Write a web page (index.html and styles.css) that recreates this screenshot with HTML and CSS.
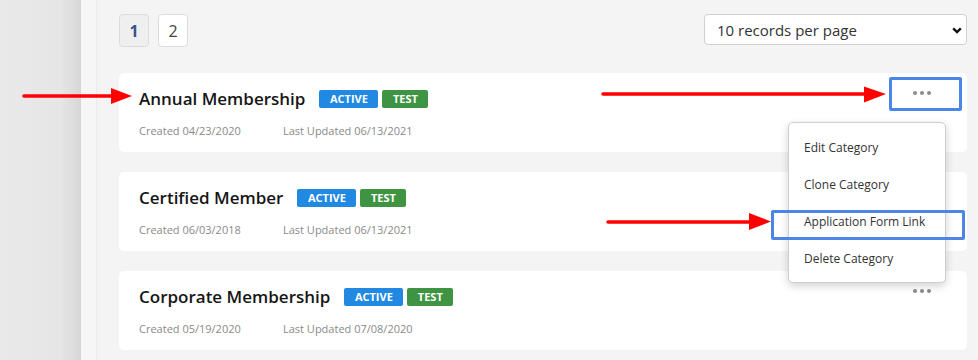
FILE: index.html
```html
<!DOCTYPE html>
<html lang="en">
<head>
    <meta charset="UTF-8">
    <meta name="viewport" content="width=device-width, initial-scale=1.0">
    <title>Membership Categories</title>
    <link rel="stylesheet" href="styles.css">
</head>
<body>
    <div class="sidebar"></div>
    <div class="gutter"></div>

    <div class="main">
        <div class="toolbar">
            <div class="pager">
                <button class="page current">1</button>
                <button class="page">2</button>
            </div>
            <div class="select-wrap">
                <select class="per-page">
                    <option>10 records per page</option>
                    <option>25 records per page</option>
                    <option>50 records per page</option>
                </select>
                <svg class="chevron" width="10" height="7" viewBox="0 0 10 7">
                    <path d="M1.2 1.3 L5 5 L8.8 1.3" fill="none" stroke="#111" stroke-width="2.4"/>
                </svg>
            </div>
        </div>

        <div class="cards">
            <div class="card">
                <div class="card-body">
                    <div class="card-head">
                        <h3>Annual Membership</h3>
                        <span class="badge active">ACTIVE</span>
                        <span class="badge test">TEST</span>
                    </div>
                    <div class="meta">
                        <span class="created">Created 04/23/2020</span>
                        <span>Last Updated 06/13/2021</span>
                    </div>
                </div>
                <button class="more"><i></i><i></i><i></i></button>
            </div>

            <div class="card">
                <div class="card-body">
                    <div class="card-head">
                        <h3>Certified Member</h3>
                        <span class="badge active">ACTIVE</span>
                        <span class="badge test">TEST</span>
                    </div>
                    <div class="meta">
                        <span class="created">Created 06/03/2018</span>
                        <span>Last Updated 06/13/2021</span>
                    </div>
                </div>
                <button class="more"><i></i><i></i><i></i></button>
            </div>

            <div class="card">
                <div class="card-body">
                    <div class="card-head">
                        <h3>Corporate Membership</h3>
                        <span class="badge active">ACTIVE</span>
                        <span class="badge test">TEST</span>
                    </div>
                    <div class="meta">
                        <span class="created">Created 05/19/2020</span>
                        <span>Last Updated 07/08/2020</span>
                    </div>
                </div>
                <button class="more"><i></i><i></i><i></i></button>
            </div>
        </div>
    </div>

    <!-- dropdown opened from the first card -->
    <ul class="menu">
        <li>Edit Category</li>
        <li>Clone Category</li>
        <li>Application Form Link</li>
        <li>Delete Category</li>
    </ul>

    <!-- screenshot annotations -->
    <div class="mark mark-more"></div>
    <div class="mark mark-link"></div>
    <svg class="arrows" width="978" height="360" viewBox="0 0 978 360">
        <g fill="#f00" stroke="#f00">
            <line x1="24" y1="96" x2="113" y2="96" stroke-width="3.5" stroke-linecap="round"/>
            <polygon points="111,88 132,96 111,104" stroke="none"/>
            <line x1="603" y1="94" x2="866" y2="94" stroke-width="3.5" stroke-linecap="round"/>
            <polygon points="864,86.5 886,94 864,102.5" stroke="none"/>
            <line x1="608" y1="222" x2="751" y2="222" stroke-width="3.5" stroke-linecap="round"/>
            <polygon points="749,213 771,221.5 749,230" stroke="none"/>
        </g>
    </svg>
</body>
</html>
```

FILE: styles.css
```css
body {
    margin: 0;
    height: 360px;
    overflow: hidden;
    display: flex;
    position: relative;
    font-family: "Open Sans", Arial, sans-serif;
    background: #f4f4f4;
}
.sidebar {
    width: 81px;
    flex-shrink: 0;
    background: linear-gradient(to right, #e9e9e9 0, #e6e6e6 60px, #d7d7d7 81px);
}
.gutter {
    width: 15px;
    flex-shrink: 0;
    background: #f6f6f6;
    border-right: 1px solid #ebebeb;
}
.main {
    flex: 1;
    padding: 14px 11px 0 22px;
    background: #f4f4f4;
}
.toolbar {
    display: flex;
    justify-content: space-between;
    align-items: flex-start;
}
.pager {
    display: flex;
    gap: 9px;
}
.page {
    width: 30px;
    height: 33px;
    padding: 0;
    border: 1px solid #dcdcdc;
    border-radius: 4px;
    background: #fff;
    color: #444;
    font-family: "Open Sans", Arial, sans-serif;
    font-size: 16px;
}
.page.current {
    background: #efefef;
    color: #34558a;
    font-weight: 700;
}
.select-wrap {
    position: relative;
}
.per-page {
    appearance: none;
    -webkit-appearance: none;
    width: 263px;
    height: 31px;
    padding: 0 12px;
    border: 1px solid #cfcfcf;
    border-radius: 4px;
    background: #fff;
    color: #333;
    font-family: "Open Sans", Arial, sans-serif;
    font-size: 15px;
}
.chevron {
    position: absolute;
    right: 5px;
    top: 13px;
    pointer-events: none;
}
.cards {
    margin-top: 26px;
    display: flex;
    flex-direction: column;
    gap: 20px;
}
.card {
    display: flex;
    justify-content: space-between;
    align-items: flex-start;
    padding: 14px 20px 13px;
    background: #fff;
    border-radius: 5px;
}
.card-head {
    display: flex;
    align-items: center;
    height: 24px;
}
.card-head h3 {
    margin: 0 14px 0 0;
    font-size: 17px;
    font-weight: 600;
    line-height: 24px;
    color: #161616;
}
.badge {
    height: 18px;
    line-height: 18px;
    padding: 0 10.5px;
    margin-right: 4px;
    border-radius: 2px;
    color: #fff;
    font-size: 11px;
    font-weight: 700;
}
.badge.active {
    background: #2189e2;
}
.badge.test {
    background: #3e9442;
}
.meta {
    display: flex;
    margin-top: 12px;
    font-size: 11px;
    line-height: 16px;
    color: #8a8a8a;
}
.meta .created {
    width: 144px;
}
.more {
    width: 50px;
    height: 20px;
    margin-top: -4px;
    padding: 0;
    border: none;
    background: none;
    display: flex;
    justify-content: center;
    align-items: center;
    gap: 3px;
}
.more i {
    width: 4px;
    height: 4px;
    border-radius: 50%;
    background: #8c8c8c;
}
.menu {
    position: absolute;
    left: 788px;
    top: 122px;
    width: 156px;
    margin: 0;
    padding: 6px 0 5px;
    list-style: none;
    background: #fff;
    border: 1px solid #cfcfcf;
    border-radius: 5px;
    box-shadow: 0 3px 8px rgba(0, 0, 0, 0.18);
}
.menu li {
    padding-left: 15px;
    line-height: 37px;
    font-size: 12px;
    color: #333;
}
.mark {
    position: absolute;
    border: 3px solid #4a86e8;
    border-radius: 2px;
    box-sizing: border-box;
}
.mark-more {
    left: 889px;
    top: 77px;
    width: 73px;
    height: 34px;
}
.mark-link {
    left: 771px;
    top: 210px;
    width: 194px;
    height: 30px;
}
.arrows {
    position: absolute;
    left: 0;
    top: 0;
    pointer-events: none;
}
```
